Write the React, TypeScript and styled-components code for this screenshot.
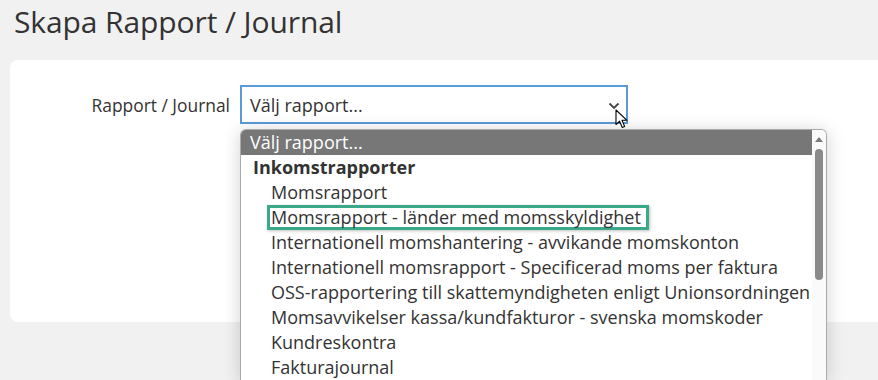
import styled, { createGlobalStyle } from 'styled-components';

const Global = createGlobalStyle`
  html, body {
    margin: 0;
    padding: 0;
    background: #f1f1f1;
    overflow: hidden;
  }
  body {
    font-family: "Open Sans", "Liberation Sans", sans-serif;
    color: #333;
  }
`;

const groups = [
  {
    title: 'Inkomstrapporter',
    items: [
      'Momsrapport',
      'Momsrapport - länder med momsskyldighet',
      'Internationell momshantering - avvikande momskonton',
      'Internationell momsrapport - Specificerad moms per faktura',
      'OSS-rapportering till skattemyndigheten enligt Unionsordningen',
      'Momsavvikelser kassa/kundfakturor - svenska momskoder',
      'Kundreskontra',
      'Fakturajournal',
    ],
  },
];

const marked = 'Momsrapport - länder med momsskyldighet';

const App = () => {
  return (
    <Page>
      <Global />
      <Title>Skapa Rapport / Journal</Title>
      <Card>
        <FormRow>
          <Label>Rapport / Journal</Label>
          <SelectWrap>
            <SelectBox>
              <span>Välj rapport...</span>
              <Chevron viewBox="0 0 12 8">
                <path d="M1.5 1.5 L6 6 L10.5 1.5" fill="none" stroke="#444" strokeWidth="1.8" />
              </Chevron>
            </SelectBox>
            <Cursor viewBox="0 0 14 20">
              <path
                d="M1 1 L1 15.5 L4.6 12.2 L7.2 18.4 L9.6 17.4 L7 11.3 L12 11.3 Z"
                fill="#fff"
                stroke="#000"
                strokeWidth="1.1"
                strokeLinejoin="round"
              />
            </Cursor>
            <Dropdown>
              <Options>
                <Option $selected>Välj rapport...</Option>
                {groups.map((g) => (
                  <div key={g.title}>
                    <GroupTitle>{g.title}</GroupTitle>
                    {g.items.map((it) => (
                      <Item key={it}>
                        <ItemText $marked={it === marked}>{it}</ItemText>
                      </Item>
                    ))}
                  </div>
                ))}
              </Options>
              <Scrollbar>
                <ScrollArrow />
                <Thumb />
              </Scrollbar>
            </Dropdown>
          </SelectWrap>
        </FormRow>
      </Card>
    </Page>
  );
};

const Page = styled.div`
  padding: 0 0 0 10px;
  height: 380px;
  overflow: hidden;
`;

const Title = styled.h1`
  margin: 0;
  padding: 0 0 0 4px;
  height: 60px;
  font-size: 30px;
  font-weight: 400;
  line-height: 44px;
  color: #333;
  letter-spacing: -0.1px;
`;

const Card = styled.div`
  background: #fff;
  border-radius: 8px;
  margin-right: -30px;
  height: 262px;
  padding-top: 25px;
  box-sizing: border-box;
`;

const FormRow = styled.div`
  display: flex;
  align-items: center;
  gap: 10px;
`;

const Label = styled.div`
  width: 220px;
  text-align: right;
  font-size: 17.4px;
  color: #333;
`;

const SelectWrap = styled.div`
  position: relative;
`;

const SelectBox = styled.div`
  width: 388px;
  height: 39px;
  box-sizing: border-box;
  border: 2px solid #5a9ad9;
  display: flex;
  align-items: center;
  justify-content: space-between;
  padding: 0 6px 0 8px;
  font-size: 18px;
  color: #333;
  background: #fff;
`;

const Chevron = styled.svg`
  width: 12px;
  height: 8px;
  margin-top: 2px;
`;

const Cursor = styled.svg`
  position: absolute;
  left: 375px;
  top: 24px;
  width: 14px;
  height: 20px;
  z-index: 3;
`;

const Dropdown = styled.div`
  position: absolute;
  left: 0;
  top: 44px;
  width: 587px;
  height: 251px;
  box-sizing: border-box;
  background: #fff;
  border: 1px solid #aaa;
  border-bottom: none;
  border-radius: 6px 6px 0 0;
  box-shadow: 0 2px 18px rgba(0, 0, 0, 0.18);
  display: flex;
  overflow: hidden;
  z-index: 2;
`;

const Options = styled.div`
  flex: 1;
  font-size: 18px;
  color: #333;
`;

const Option = styled.div<{ $selected?: boolean }>`
  height: 25px;
  line-height: 25px;
  padding-left: 9px;
  background: ${(p) => (p.$selected ? '#777' : 'transparent')};
  color: ${(p) => (p.$selected ? '#fff' : '#333')};
`;

const GroupTitle = styled.div`
  height: 25px;
  line-height: 25px;
  padding-left: 12px;
  font-weight: 700;
  color: #333;
`;

const Item = styled.div`
  height: 25px;
  line-height: 25px;
  padding-left: 30px;
  white-space: nowrap;
`;

const ItemText = styled.span<{ $marked?: boolean }>`
  display: inline-block;
  line-height: 19px;
  ${(p) =>
    p.$marked &&
    `
    border: 3px solid #3aa98a;
    padding: 0 5px 0 1px;
    margin-left: -4px;
    box-shadow: 1px 1px 3px rgba(0, 0, 0, 0.25);
  `}
`;

const Scrollbar = styled.div`
  width: 14px;
  background: #fafafa;
  display: flex;
  flex-direction: column;
  align-items: center;
  padding-top: 7px;
`;

const ScrollArrow = styled.div`
  width: 0;
  height: 0;
  border-left: 4px solid transparent;
  border-right: 4px solid transparent;
  border-bottom: 5px solid #7a7a7a;
`;

const Thumb = styled.div`
  margin-top: 7px;
  width: 8px;
  height: 131px;
  border-radius: 4px;
  background: #8a8a8a;
`;

export default App;
